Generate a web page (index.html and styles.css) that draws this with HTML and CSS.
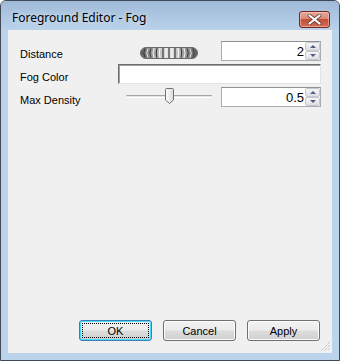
FILE: index.html
```html
<!DOCTYPE html>
<html lang="en">
<head>
  <meta charset="UTF-8" />
  <title>Foreground Editor - Fog</title>
  <link rel="stylesheet" href="styles.css">
</head>
<body>
  <div class="window">
    <div class="titlebar">
      <span class="title">Foreground Editor - Fog</span>
      <button class="close" aria-label="Close">
        <svg width="15" height="11" viewBox="0 0 15 11">
          <path d="M2.5,1.5 L12.5,9.5 M12.5,1.5 L2.5,9.5" stroke="#6b3a33" stroke-width="3.6" stroke-linecap="round"/>
          <path d="M2.5,1.5 L12.5,9.5 M12.5,1.5 L2.5,9.5" stroke="#fff" stroke-width="2.2" stroke-linecap="round"/>
        </svg>
      </button>
    </div>

    <div class="client">
      <div class="fields">
        <label class="field-label">Distance</label>
        <div class="jog-cell">
          <svg class="jog" width="58" height="12" viewBox="0 0 58 12">
            <defs>
              <linearGradient id="jogShade" x1="0" x2="1" y1="0" y2="0">
                <stop offset="0" stop-color="#5c5c5c"/>
                <stop offset="0.3" stop-color="#b4b4b4"/>
                <stop offset="0.5" stop-color="#e6e6e6"/>
                <stop offset="0.7" stop-color="#b4b4b4"/>
                <stop offset="1" stop-color="#5c5c5c"/>
              </linearGradient>
            </defs>
            <rect x="0.5" y="0.5" width="57" height="11" rx="5.5" fill="url(#jogShade)" stroke="#6a6a6a"/>
            <g fill="none" stroke-width="1">
              <path d="M5,1.5 Q2.5,6 5,10.5" stroke="#3a3a3a"/>
              <path d="M8,1.5 Q5.5,6 8,10.5" stroke="#e8e8e8"/>
              <path d="M11,1.5 Q8.5,6 11,10.5" stroke="#3a3a3a"/>
              <path d="M14,1 Q12,6 14,11" stroke="#f4f4f4"/>
              <path d="M17,1 Q15.5,6 17,11" stroke="#2e2e2e"/>
              <path d="M20,1 Q19,6 20,11" stroke="#fff"/>
              <path d="M23,1 V11" stroke="#222"/>
              <path d="M26,1 V11" stroke="#fff"/>
              <path d="M29,1 V11" stroke="#111"/>
              <path d="M32,1 V11" stroke="#fff"/>
              <path d="M35,1 V11" stroke="#222"/>
              <path d="M38,1 Q39,6 38,11" stroke="#fff"/>
              <path d="M41,1 Q42.5,6 41,11" stroke="#2e2e2e"/>
              <path d="M44,1 Q46,6 44,11" stroke="#f4f4f4"/>
              <path d="M47,1.5 Q49.5,6 47,10.5" stroke="#3a3a3a"/>
              <path d="M50,1.5 Q52.5,6 50,10.5" stroke="#e8e8e8"/>
              <path d="M53,1.5 Q55.5,6 53,10.5" stroke="#3a3a3a"/>
            </g>
          </svg>
        </div>
        <div class="spin">
          <input class="spin-value" type="text" value="2">
          <div class="spin-buttons">
            <span class="spin-btn up"></span>
            <span class="spin-btn down"></span>
          </div>
        </div>

        <label class="field-label">Fog Color</label>
        <div class="color-box"></div>

        <label class="field-label">Max Density</label>
        <div class="slider">
          <div class="slider-track"></div>
          <svg class="slider-thumb" width="9" height="16" viewBox="0 0 9 16">
            <defs>
              <linearGradient id="thumbShade" x1="0" x2="1" y1="0" y2="0">
                <stop offset="0" stop-color="#ffffff"/>
                <stop offset="1" stop-color="#d8d8d8"/>
              </linearGradient>
            </defs>
            <path d="M1.5,0.5 H7.5 Q8.5,0.5 8.5,1.5 V12 L4.5,15.5 L0.5,12 V1.5 Q0.5,0.5 1.5,0.5 Z" fill="url(#thumbShade)" stroke="#707070"/>
          </svg>
        </div>
        <div class="spin">
          <input class="spin-value" type="text" value="0.5">
          <div class="spin-buttons">
            <span class="spin-btn up"></span>
            <span class="spin-btn down"></span>
          </div>
        </div>
      </div>

      <div class="buttons">
        <button class="btn default"><span class="focus">OK</span></button>
        <button class="btn">Cancel</button>
        <button class="btn">Apply</button>
      </div>

      <svg class="grip" width="12" height="12" viewBox="0 0 12 12">
        <path d="M11,2 L2,11 M11,5 L5,11 M11,8 L8,11" stroke="#a8a8a8" stroke-width="1" stroke-dasharray="1 1"/>
        <path d="M12,2 L2,12 M12,5 L5,12 M12,8 L8,12" stroke="#fff" stroke-width="1" stroke-dasharray="1 1"/>
      </svg>
    </div>
  </div>
</body>
</html>
```

FILE: styles.css
```css
* {
  box-sizing: border-box;
}

body {
  margin: 0;
  width: 340px;
  height: 361px;
  font-family: "Liberation Sans", Arial, sans-serif;
  font-size: 11px;
  background: #ffffff;
}

.window {
  width: 340px;
  height: 361px;
  border: 1px solid #3f4a56;
  border-radius: 6px 6px 0 0;
  background: #bcd3ec;
  display: flex;
  flex-direction: column;
}

.titlebar {
  height: 29px;
  flex: none;
  display: flex;
  align-items: flex-start;
  justify-content: space-between;
  border-radius: 5px 5px 0 0;
  background: linear-gradient(#9fbad8, #bad2eb);
}

.title {
  margin: 9px 0 0 11px;
  font-family: "Noto Sans", "Open Sans", sans-serif;
  font-size: 12px;
  line-height: 16px;
  color: #000;
  text-shadow: 0 0 6px rgba(255, 255, 255, 0.8);
}

.close {
  margin: 10px 9px 0 0;
  width: 31px;
  height: 17px;
  padding: 0;
  border: 1px solid #6d2a22;
  border-radius: 3px;
  background: linear-gradient(#e9a99b 0%, #d88a78 45%, #c5503a 50%, #d66b52 100%);
  box-shadow: inset 0 0 0 1px rgba(255, 210, 200, 0.5);
  display: flex;
  align-items: center;
  justify-content: center;
}

.client {
  position: relative;
  flex: 1;
  margin: 0 7px 7px 7px;
  background: #f0f0f0;
  display: flex;
  flex-direction: column;
  justify-content: space-between;
  padding: 11px 12px 12px 12px;
}

.fields {
  display: grid;
  grid-template-columns: 99px 102px 100px;
  grid-template-rows: 20px 20px 20px;
  row-gap: 3px;
}

.field-label {
  align-self: end;
  padding-left: 0;
  line-height: 13px;
  color: #000;
}

.jog-cell {
  display: flex;
  align-items: center;
  padding-left: 21px;
  padding-top: 4px;
}

.spin {
  display: flex;
  height: 20px;
  border: 1px solid #abadb3;
  border-top-color: #8e9196;
  background: #fff;
}

.spin-value {
  flex: 1;
  min-width: 0;
  border: none;
  padding: 0 1px 0 0;
  margin: 0;
  text-align: right;
  font-family: "Liberation Sans", Arial, sans-serif;
  font-size: 13px;
  color: #000;
  background: transparent;
  outline: none;
}

.spin-buttons {
  width: 15px;
  display: flex;
  flex-direction: column;
  gap: 0;
}

.spin-btn {
  flex: 1;
  position: relative;
  border: 1px solid #c5c8cd;
  border-radius: 2px;
  background: linear-gradient(#f6f6f6, #dedfe2);
}

.spin-btn::after {
  content: "";
  position: absolute;
  left: 4px;
  top: 2px;
  border-left: 3px solid transparent;
  border-right: 3px solid transparent;
}

.spin-btn.up::after {
  border-bottom: 3px solid #4c5f8c;
}

.spin-btn.down::after {
  border-top: 3px solid #4c5f8c;
}

.color-box {
  grid-column: 2 / 4;
  margin-left: -1px;
  height: 20px;
  background: #fff;
  border: 1px solid;
  border-color: #6d6d6d #e3e3e3 #e3e3e3 #6d6d6d;
  box-shadow: inset 1px 1px 0 #a0a0a0;
}

.slider {
  position: relative;
  margin-left: 7px;
  width: 86px;
}

.slider-track {
  margin-top: 8px;
  height: 3px;
  border-top: 1px solid #a6a6a6;
  border-bottom: 1px solid #ffffff;
  background: #e4e4e4;
  border-radius: 1px;
}

.slider-thumb {
  position: absolute;
  left: 39px;
  top: 1px;
}

.buttons {
  display: flex;
  justify-content: flex-end;
  gap: 11px;
  padding-right: 0;
}

.btn {
  width: 73px;
  height: 21px;
  padding: 0;
  border: 1px solid #707070;
  border-radius: 3px;
  background: linear-gradient(#f2f2f2 0%, #ebebeb 48%, #dddddd 52%, #cfcfcf 100%);
  box-shadow: inset 0 0 0 1px #fcfcfc;
  font-family: "Liberation Sans", Arial, sans-serif;
  font-size: 11px;
  color: #000;
}

.btn.default {
  border-color: #3c7fb1;
  box-shadow: inset 0 0 0 1px #48d8fb;
  padding: 2px;
}

.focus {
  display: flex;
  align-items: center;
  justify-content: center;
  height: 100%;
  border: 1px dotted #000;
}

.grip {
  position: absolute;
  right: 1px;
  bottom: 1px;
}
```
